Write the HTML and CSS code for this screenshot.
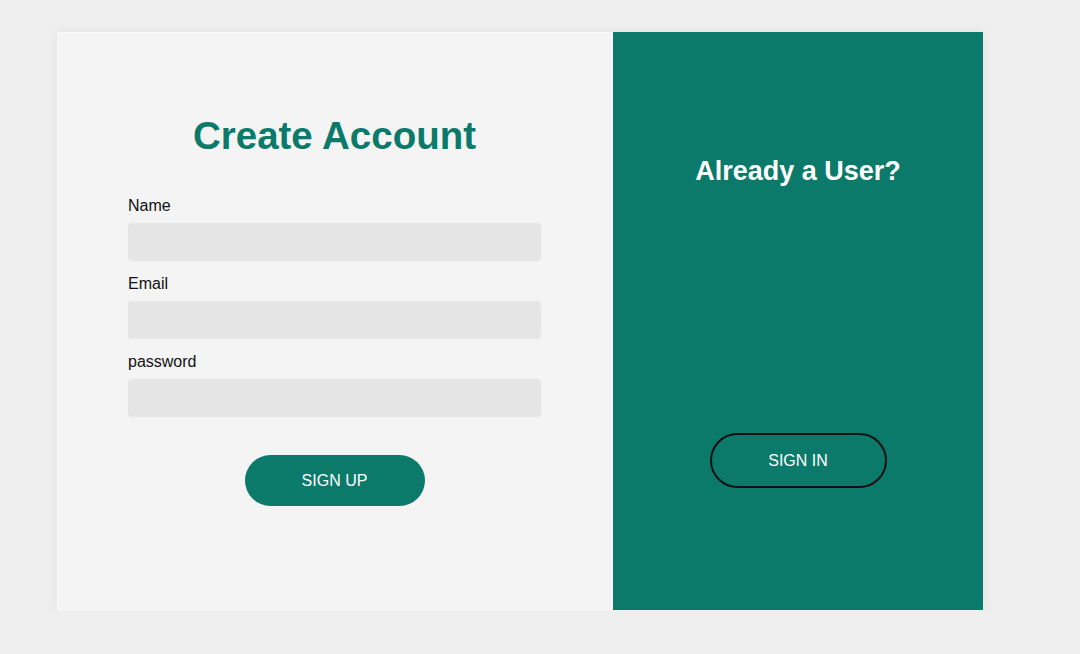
FILE: index.html
```html
<!DOCTYPE html>
<html>
<head>
<meta charset="utf-8">
<link rel="stylesheet" href="styles.css">
</head>
<body>
<div class="page">
  <div class="card">
    <div class="signup-panel">
      <h1 class="title">Create Account</h1>
      <form class="form">
        <div class="field">
          <label class="label">Name</label>
          <input class="input" type="text">
        </div>
        <div class="field">
          <label class="label">Email</label>
          <input class="input" type="email">
        </div>
        <div class="field">
          <label class="label">password</label>
          <input class="input" type="password">
        </div>
        <div class="actions">
          <button type="button" class="btn-primary">SIGN UP</button>
        </div>
      </form>
    </div>
    <div class="signin-panel">
      <h2 class="subtitle">Already a User?</h2>
      <button type="button" class="btn-outline">SIGN IN</button>
    </div>
  </div>
</div>
</body>
</html>
```

FILE: styles.css
```css
* { box-sizing: border-box; }
html, body {
  margin: 0;
  padding: 0;
  background: #efefef;
  font-family: "Liberation Sans", Arial, sans-serif;
}
.page {
  padding: 32px 0 0 57px;
}
.card {
  display: flex;
  width: 926px;
  height: 578px;
  box-shadow: 0 0 12px rgba(0, 0, 0, 0.06);
}
.signup-panel {
  width: 556px;
  background: #f4f4f4;
  border: 1px solid #fbfbfb;
  padding: 84px 71px 0 70px;
  display: flex;
  flex-direction: column;
}
.title {
  margin: 0;
  font-size: 38.5px;
  line-height: 38px;
  font-weight: bold;
  color: #0b7a6a;
  text-align: center;
}
.form {
  margin-top: 42px;
  display: flex;
  flex-direction: column;
}
.field {
  display: flex;
  flex-direction: column;
  margin-bottom: 14px;
}
.label {
  font-size: 16px;
  line-height: 18px;
  color: #111;
  margin-bottom: 8px;
}
.input {
  height: 38px;
  border: none;
  border-radius: 4px;
  background: #e5e5e5;
  outline: none;
  width: 100%;
}
.actions {
  display: flex;
  justify-content: center;
  margin-top: 24px;
}
.btn-primary {
  width: 180px;
  height: 51px;
  border: none;
  border-radius: 26px;
  background: #0b7a6a;
  color: #fff;
  font-family: "Liberation Sans", Arial, sans-serif;
  font-size: 16px;
  cursor: pointer;
}
.signin-panel {
  flex: 1;
  background: #0b7a6a;
  display: flex;
  flex-direction: column;
  align-items: center;
  padding-top: 126px;
}
.subtitle {
  margin: 0;
  font-size: 27px;
  line-height: 27px;
  font-weight: bold;
  color: #fff;
}
.btn-outline {
  margin-top: 248px;
  width: 177px;
  height: 55px;
  border: 2px solid #111;
  border-radius: 28px;
  background: transparent;
  color: #fff;
  font-family: "Liberation Sans", Arial, sans-serif;
  font-size: 16px;
  cursor: pointer;
}
```
